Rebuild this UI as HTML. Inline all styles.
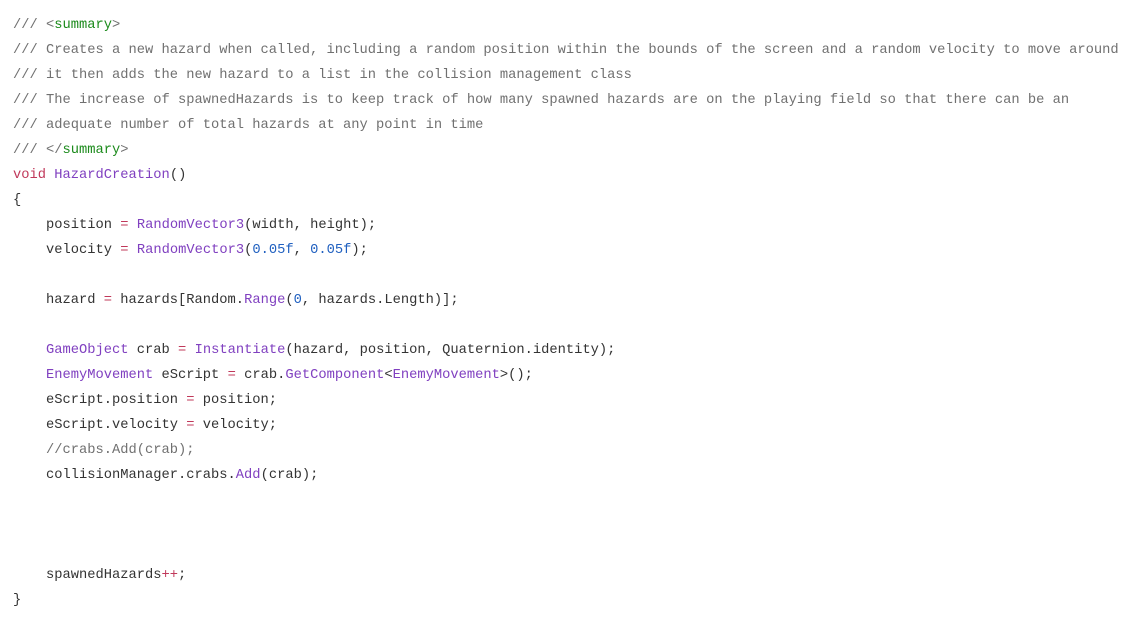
<!DOCTYPE html>
<html><head><style>
body{margin:0;background:#fff;width:1132px;height:620px;overflow:hidden}
pre{margin:0;position:absolute;left:13px;top:13px;font-family:"Liberation Mono",monospace;font-size:13.75px;line-height:25px;color:#333}
.c{color:#707070}.t{color:#1b8a1b}.k{color:#c0385a}.f{color:#8040c0}.o{color:#c0385a}.n{color:#2060c0}
</style></head><body><pre><span class="c">/// &lt;<span class="t">summary</span>&gt;
/// Creates a new hazard when called, including a random position within the bounds of the screen and a random velocity to move around
/// it then adds the new hazard to a list in the collision management class
/// The increase of spawnedHazards is to keep track of how many spawned hazards are on the playing field so that there can be an
/// adequate number of total hazards at any point in time
/// &lt;/<span class="t">summary</span>&gt;</span>
<span class="k">void</span> <span class="f">HazardCreation</span>()
{
    position <span class="o">=</span> <span class="f">RandomVector3</span>(width, height);
    velocity <span class="o">=</span> <span class="f">RandomVector3</span>(<span class="n">0.05f</span>, <span class="n">0.05f</span>);

    hazard <span class="o">=</span> hazards[Random.<span class="f">Range</span>(<span class="n">0</span>, hazards.Length)];

    <span class="f">GameObject</span> crab <span class="o">=</span> <span class="f">Instantiate</span>(hazard, position, Quaternion.identity);
    <span class="f">EnemyMovement</span> eScript <span class="o">=</span> crab.<span class="f">GetComponent</span>&lt;<span class="f">EnemyMovement</span>&gt;();
    eScript.position <span class="o">=</span> position;
    eScript.velocity <span class="o">=</span> velocity;
    <span class="c">//crabs.Add(crab);</span>
    collisionManager.crabs.<span class="f">Add</span>(crab);



    spawnedHazards<span class="o">++</span>;
}</pre></body></html>
